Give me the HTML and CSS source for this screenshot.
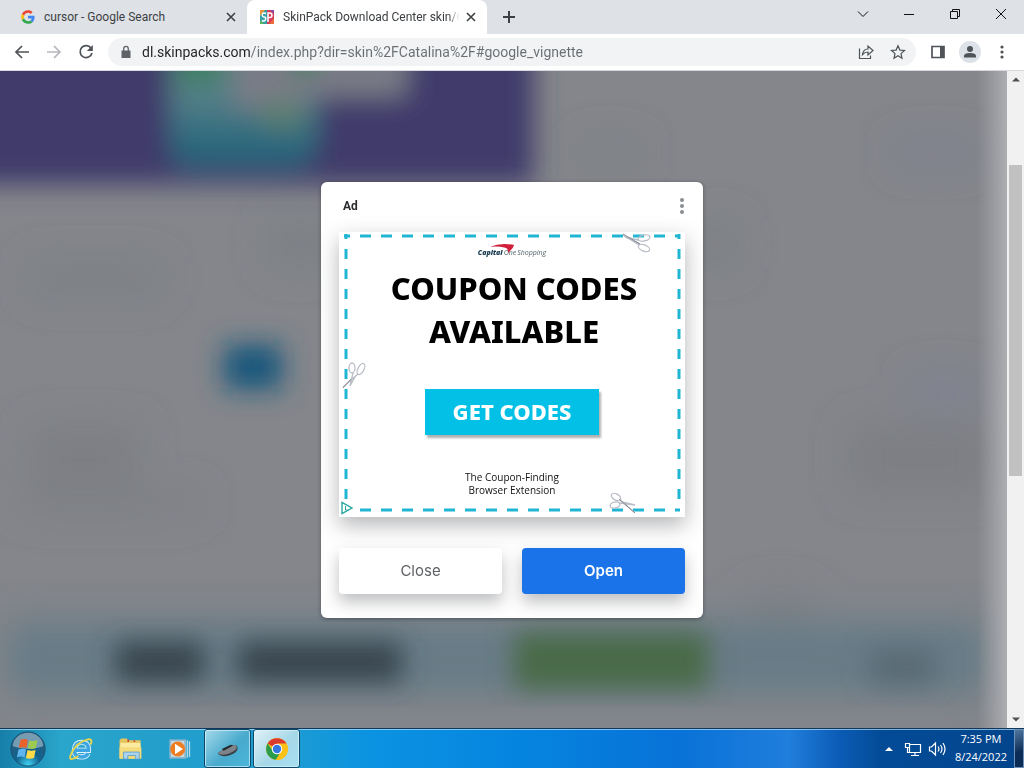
FILE: index.html
```html
<!DOCTYPE html>
<html lang="en">
<head>
<meta charset="utf-8">
<meta name="viewport" content="width=device-width, initial-scale=1">
<title>SkinPack Download Center</title>
<link rel="stylesheet" href="styles.css">
</head>
<body>
<header class="tabstrip">
  <div class="tab tab-idle">
    <svg class="favicon" viewBox="-4 -4 56 56" aria-hidden="true"><path fill="#ea4335" d="M24 9.500c3.540 0 6.710 1.220 9.210 3.600l6.850-6.850C35.900 2.380 30.470 0 24 0 14.620 0 6.510 5.380 2.560 13.220l7.980 6.190C12.430 13.720 17.740 9.500 24 9.500z"/><path fill="#4285f4" d="M46.980 24.550c0-1.570-.15-3.090-.38-4.550H24v9.020h12.940c-.58 2.960-2.260 5.480-4.780 7.180l7.730 6c4.510-4.180 7.090-10.360 7.090-17.650z"/><path fill="#fbbc05" d="M10.530 28.590c-.48-1.450-.76-2.990-.76-4.590s.27-3.140.76-4.590l-7.980-6.190C.92 16.460 0 20.120 0 24c0 3.880.92 7.540 2.560 10.780l7.970-6.190z"/><path fill="#34a853" d="M24 48c6.480 0 11.930-2.130 15.890-5.810l-7.730-6c-2.150 1.450-4.920 2.300-8.160 2.300-6.260 0-11.570-4.220-13.470-9.910l-7.980 6.190C6.510 42.620 14.620 48 24 48z"/></svg>
    <a class="tab-title" href="#">cursor - Google Search</a>
    <button class="tab-close" aria-label="Close tab"><svg viewBox="0 0 16 16"><path d="M4 4l8 8M12 4l-8 8"/></svg></button>
  </div>
  <div class="tab tab-active">
    <svg class="favicon" viewBox="0 0 16 16" aria-hidden="true">
      <path fill="#35a0a8" d="M1 1h7v14H1z"/><path fill="#d93a55" d="M8 1h7v14H8z"/><path fill="#e8963c" d="M1 1h5l-5 6z"/><path fill="#5bb85c" d="M1 11l4 4H1z"/><path fill="#8a4aa8" d="M11 1h4v4z"/><path fill="#e86b3a" d="M15 9v6h-5z"/>
      <path d="M7 4.500Q3.500 3 3.300 5.500T5.200 8T6.500 10.500T3 11.500M9 13V4h1.800Q13 4 13 6.300T10.800 8.600H9" fill="none" stroke="#fff" stroke-width="1.500"/>
    </svg>
    <a class="tab-title" href="#">SkinPack Download Center skin/C</a>
    <button class="tab-close" aria-label="Close tab"><svg viewBox="0 0 16 16"><path d="M4 4l8 8M12 4l-8 8"/></svg></button>
  </div>
  <button class="new-tab" aria-label="New tab"><svg viewBox="0 0 16 16"><path d="M8 2v12M2 8h12"/></svg></button>
  <div class="window-controls">
    <button aria-label="Search tabs"><svg viewBox="0 0 12 12"><path d="M1 3.500l5 5 5-5"/></svg></button>
    <button aria-label="Minimize"><svg viewBox="0 0 12 12"><path d="M1 6.500h10"/></svg></button>
    <button aria-label="Restore"><svg viewBox="0 0 12 12"><path d="M1.500 3.500h7v7h-7zM3.500 3.500v-2h7v7h-2"/></svg></button>
    <button aria-label="Close"><svg viewBox="0 0 12 12"><path d="M1 1l10 10M11 1L1 11"/></svg></button>
  </div>
</header>

<nav class="toolbar">
  <button class="tool" aria-label="Back"><svg viewBox="0 0 16 16"><path d="M15 8H2M8 2L2 8l6 6"/></svg></button>
  <button class="tool tool-off" aria-label="Forward"><svg viewBox="0 0 16 16"><path d="M1 8h13M8 2l6 6-6 6"/></svg></button>
  <button class="tool" aria-label="Reload"><svg viewBox="0 0 16 16"><path d="M13.300 4.500A6 6 0 1 0 14 9"/><path class="solid" d="M14.800 1v6h-6z"/></svg></button>
  <form class="omnibox">
    <svg class="lock" viewBox="0 0 12 14" aria-hidden="true"><path fill="#5f6368" d="M1.500 5.500h9V13h-9z"/><path d="M3.700 6V3.700a2.300 2.300 0 0 1 4.600 0V6" fill="none" stroke="#5f6368" stroke-width="1.300"/></svg>
    <input class="address" type="text" aria-label="Address" value="dl.skinpacks.com/index.php?dir=skin%2FCatalina%2F#google_vignette">
    <button type="button" class="tool" aria-label="Share"><svg class="thin" viewBox="0 0 16 16"><path d="M1.500 4.500v10h11v-3"/><path d="M4.500 10.500C5 7 7 5 10 5V2l5 4.500-5 4.500V8C7.500 8 6 8.800 4.500 10.500z"/></svg></button>
    <button type="button" class="tool" aria-label="Bookmark"><svg class="thin" viewBox="0 0 16 16"><path d="M8 1.800l1.900 4.300 4.600.4-3.500 3.100 1 4.600-4-2.400-4 2.400 1-4.600-3.500-3.100 4.600-.4z"/></svg></button>
  </form>
  <button class="tool" aria-label="Side panel"><svg viewBox="0 0 16 16"><path d="M2 2.500h12v11H2z"/><path class="solid" d="M10 2h4v12h-4z"/></svg></button>
  <button class="tool" aria-label="Profile"><span class="avatar"><svg viewBox="0 0 16 16"><g class="solid"><circle cx="8" cy="5" r="3"/><path d="M2 13.500V12q0-3 6-3t6 3v1.500z"/></g></svg></span></button>
  <button class="tool" aria-label="Menu"><svg viewBox="0 0 16 16"><g class="solid"><circle cx="8" cy="3" r="1.600"/><circle cx="8" cy="8" r="1.600"/><circle cx="8" cy="13" r="1.600"/></g></svg></button>
</nav>

<main class="viewport">
  <div class="page">
    <svg class="page-art" viewBox="0 0 1007 657" preserveAspectRatio="none" aria-hidden="true">
      <defs>
        <filter id="soft" x="-30%" y="-30%" width="160%" height="160%"><feGaussianBlur stdDeviation="13"/></filter>
        <filter id="softer" x="-50%" y="-50%" width="200%" height="200%"><feGaussianBlur stdDeviation="18"/></filter>
        <linearGradient id="edge"><stop offset="0" stop-color="#a8a9ae" stop-opacity="0"/><stop offset="1" stop-color="#adaeb2"/></linearGradient>
        <linearGradient id="cover" x2="0" y2="1"><stop offset="0" stop-color="#5c8178"/><stop offset=".45" stop-color="#557f88"/><stop offset=".8" stop-color="#29687c"/><stop offset="1" stop-color="#2c5f7c"/></linearGradient>
      </defs>
      <rect width="1007" height="657" fill="#84868b"/>
      <g filter="url(#soft)">
        <path fill="#403a6b" d="M-40-40h574V113H-40z"/>
        <path fill="url(#cover)" d="M170-30h148v102q-4 26-26 26H192q-22 0-22-20z"/>
        <path fill="#7a7b87" d="M235-40h172v66H310l-30 12h-45z"/>
        <path fill="#3a8060" d="M178-30h40v42h-40zM290-30h30v32h-30z"/>
        <path fill="#5f7f70" d="M262 28h40v28h-40z"/>
        <path fill="#15567b" d="M224 274h58v44h-58z"/>
      </g>
      <g filter="url(#softer)">
        <g fill="#787b7f" opacity=".55"><path d="M270 150h60v46h-60zM30 190h130v34H30zM30 354h110v60H30zM580 70h60v24h-60zM700 150h36v46h-36zM850 352h140v70H850z"/><path d="M20 420h180v22H20zM750 520h60v24h-60z"/></g>
        <path fill="#7b7e99" opacity=".5" d="M895 70h80v24h-80zM910 304h70v30h-70z"/>
        <path fill="#687c87" d="M6 550h982v74H6z"/>
      </g>
      <g filter="url(#soft)">
        <path fill="#38454e" d="M116 571h88v40h-88zM238 571h164v40H238z"/>
        <path fill="#4a6b47" d="M514 562h194v56H514z"/>
        <path fill="#5a6b74" d="M870 578h65v36h-65z"/>
      </g>
      <path fill="url(#edge)" d="M977 0h30v657h-30z"/>
    </svg>
  </div>
  <div class="scrollbar" aria-hidden="true">
    <svg class="scroll-arrow" viewBox="0 0 17 17"><path d="M5 10.500h8l-4-4z"/></svg>
    <div class="scroll-track"><div class="scroll-thumb"></div></div>
    <svg class="scroll-arrow" viewBox="0 0 17 17"><path d="M5 6.500h8l-4 4z"/></svg>
  </div>

  <div class="overlay">
    <section class="dialog" role="dialog" aria-label="Ad">
      <div class="dialog-head">
        <h2 class="dialog-label">Ad</h2>
        <button class="dialog-menu" aria-label="Ad options"><svg viewBox="0 0 6 18"><circle cx="3" cy="3" r="2"/><circle cx="3" cy="9" r="2"/><circle cx="3" cy="15" r="2"/></svg></button>
      </div>
      <div class="creative">
        <svg class="coupon-edge" viewBox="0 0 346 285" aria-hidden="true">
          <g stroke="#20b5d2" stroke-width="3" fill="none">
            <path stroke-dasharray="11 10" d="M21 4h310M21 278h310"/>
            <path stroke-dasharray="10 10" d="M7 17v252M340 17v252"/>
            <path d="M5 4h6M7 2v5M336 4h5M340 2v5M336 278h5"/>
          </g>
          <g fill="none" stroke="#b9bdc6" stroke-width="1.300">
            <ellipse cx="305" cy="16" rx="6" ry="3" transform="rotate(22 305 16)"/><ellipse cx="305" cy="6" rx="6" ry="3" transform="rotate(-12 305 6)"/><path d="M300 13L284 3M299 8l-13-3 15 7"/><path stroke="#858b96" stroke-width="1" d="M284 2l17 10"/>
            <ellipse cx="13" cy="136" rx="3" ry="5"/><ellipse cx="22" cy="137" rx="3" ry="6" transform="rotate(28 22 137)"/><path d="M19 142L4 155M14 141l-3 13 5-9"/><path stroke="#858b96" stroke-width="1" d="M4 156l8-9"/>
            <ellipse cx="277" cy="265" rx="5" ry="3" transform="rotate(30 277 265)"/><ellipse cx="276" cy="273" rx="5" ry="3" transform="rotate(-14 276 273)"/><path d="M281 268l14 12M281 271l15 2-13-3"/><path stroke="#858b96" stroke-width="1" d="M280 267l16 14"/>
          </g>
          <path d="M3 270.500v11l10-5.500z" fill="#fff" stroke="#25a79c" stroke-width="1.400"/><path d="M6.500 274v4h2" fill="none" stroke="#25a79c"/>
        </svg>
        <div class="brand"><b>Capital</b><i>One</i><span>Shopping</span>
          <svg class="swoosh" viewBox="0 0 28 12" aria-hidden="true"><path fill="#d0203a" d="M0 4Q12-1 27 2q-1 4-7 9 1-5-4-6Q10 3 0 4z"/></svg>
        </div>
        <h1 class="headline">COUPON CODES<br>AVAILABLE</h1>
        <a class="cta" href="#">GET CODES</a>
        <p class="tagline">The Coupon-Finding<br>Browser Extension</p>
      </div>
      <div class="actions">
        <button class="action">Close</button>
        <button class="action action-primary">Open</button>
      </div>
    </section>
  </div>
</main>

<footer class="taskbar">
  <button class="task task-start" aria-label="Start"><svg class="orb" viewBox="0 0 40 40">
    <defs><radialGradient id="orb" cx=".5" cy=".95" r=".9"><stop offset="0" stop-color="#3fd2f2"/><stop offset=".4" stop-color="#12628f"/><stop offset="1" stop-color="#2c5a78"/></radialGradient></defs>
    <circle cx="20" cy="20" r="18" fill="url(#orb)" stroke="#195070"/><path fill="#c6dbe6" opacity=".5" d="M4 17a16 14 0 0 1 32 0Q20 23 4 17z"/>
    <path fill="#e9622c" d="M12 10.500q4-2 8 0l-1.700 8.500q-4-1.500-8 0z"/><path fill="#9ccb4f" d="M21.500 11q4 1.500 8.500-.5l-1.700 8.500q-4 2-8.500 0z"/><path fill="#5fb6ee" d="M10 20.500q4-1.500 8 0l-1.700 8.500q-4-2-8 0z"/><path fill="#ffdb4a" d="M19.500 21q4 1.500 8.500 0l-1.700 8.500q-4 1.500-8.500 0z"/></svg></button>
  <button class="task" aria-label="Internet Explorer"><svg viewBox="0 0 32 32">
    <path d="M9 17.500h15.500Q25 8.500 17 8.500T8.500 17t8.500 8q5 0 7-4" fill="none" stroke="#e2f5ff" stroke-width="6"/><path d="M9 17.500h15.500Q25 8.500 17 8.500T8.500 17t8.500 8q5 0 7-4" fill="none" stroke="#3da5e2" stroke-width="4"/>
    <path d="M7 27q-6 2-2-6Q11 8 24 5q6-1 3 6M7 27q3-.5 6-3" fill="none" stroke="#e9d44a" stroke-width="2.200"/></svg></button>
  <button class="task" aria-label="Windows Explorer"><svg viewBox="0 0 32 32">
    <path fill="#e6c65c" d="M4 6l2-2h6l2 2h14v21H4z"/><path fill="#fbeaa0" d="M5 9h23v17H5z"/><path fill="#f4dc7c" d="M4 14h25v13H4z"/><path fill="#d04e37" d="M13 5h2v3h-2zM20 6h2v2h-2z"/><path fill="#a9d5ee" stroke="#5f9cc6" d="M8.500 19.500h18v8h-4v-4h-9v4h-5z"/></svg></button>
  <button class="task" aria-label="Windows Media Player"><svg viewBox="0 0 32 32">
    <path fill="#8eb6cc" d="M5 5h19v22H5z"/><path fill="#c7dbe5" d="M7 7h15v18H7z"/><path stroke="#b5d8ea" stroke-width="1.500" d="M25.500 6v20M28 7v18"/><circle cx="14.500" cy="16" r="8.500" fill="#ee7d22"/><path fill="#fff" d="M11.500 10l9 6-9 6z"/></svg></button>
  <button class="task task-open" aria-label="Mouse Properties"><svg viewBox="0 0 32 32">
    <path fill="#3a4045" d="M5 20l14-8q8-2 8 3 0 5-9 8-8 3-13-1z"/><path fill="#7d8388" d="M5 20l14-8q7-2 7 2 0 4-9 7-8 3-12 0z"/><path fill="#25292d" d="M9 16l10-5 3 1-11 6z"/></svg></button>
  <button class="task task-open task-current" aria-label="Google Chrome"><svg viewBox="0 0 32 32">
    <circle cx="16" cy="16" r="12.500" fill="#fbc116"/><path fill="#da3b2e" d="M16 16L5.200 9.800a12.500 12.500 0 0 1 21.600 0z"/><path fill="#2a9c4b" d="M5.200 9.800a12.500 12.500 0 0 0 9.600 18.600L20.800 18.500 12 19z"/><path fill="#fbc116" d="M26.800 9.800H16l4.800 8.700-6 9.900A12.500 12.500 0 0 0 26.800 9.800z"/><circle cx="16" cy="16" r="6" fill="#fff"/><circle cx="16" cy="16" r="4.800" fill="#3478df"/></svg></button>
  <div class="tray">
    <button class="tray-icon" aria-label="Show hidden icons"><svg viewBox="0 0 16 16"><path fill="#fff" d="M4 10h8L8 6z"/></svg></button>
    <button class="tray-icon" aria-label="Network"><svg viewBox="0 0 18 16"><path d="M5.500 3.500h11v8h-11zM11 12v2.500M7 14.500h8M1.500 2.500h4v4h-4zM3.500 6.500v5h2"/></svg></button>
    <button class="tray-icon" aria-label="Volume"><svg viewBox="0 0 18 16"><path d="M1.500 6h2l4-4v12l-4-4h-2zM10 5.500q2 2.500 0 5M12.500 4q3 4 0 8M15 2q4 6 0 12"/></svg></button>
    <time class="clock" datetime="2022-08-24T19:35"><span>7:35 PM</span><span>8/24/2022</span></time>
    <button class="show-desktop" aria-label="Show desktop"></button>
  </div>
</footer>
</body>
</html>
```

FILE: styles.css
```css
* { box-sizing: border-box; }

body {
  margin: 0;
  height: 100vh;
  display: flex;
  flex-direction: column;
  overflow: hidden;
  font-family: "Open Sans", "Noto Sans", sans-serif;
  font-size: 12px;
  color: #3c4043;
}

button {
  border: 0;
  padding: 0;
  background: none;
  font: inherit;
  color: inherit;
  display: flex;
  align-items: center;
  justify-content: center;
}

svg { display: block; }
a { color: inherit; text-decoration: none; }

/* Tab strip */
.tabstrip {
  display: flex;
  height: 34px;
  background: #dee1e6;
}

.tab {
  display: flex;
  align-items: center;
  padding: 0 8px 0 20px;
  flex: 0 1 247px;
  min-width: 0;
}

.tab-active {
  flex-basis: 240px;
  padding: 0 8px 0 12px;
  background: #fff;
  border-radius: 8px 8px 0 0;
}

.favicon { width: 16px; height: 16px; flex: none; margin-right: 8px; }

.tab-title {
  flex: 1;
  min-width: 0;
  overflow: hidden;
  font-family: Roboto, sans-serif;
  white-space: nowrap;
}

.tab-active .tab-title {
  -webkit-mask-image: linear-gradient(90deg, #000 92%, transparent 98%);
  mask-image: linear-gradient(90deg, #000 92%, transparent 98%);
}

.tab-close { width: 16px; height: 16px; flex: none; }
.tab-close svg { width: 16px; stroke: #3c4043; stroke-width: 1.600; }

.new-tab { width: 44px; }
.new-tab svg { width: 16px; stroke: #3c4043; stroke-width: 2; }

.window-controls {
  display: flex;
  margin-left: auto;
  height: 28px;
}

.window-controls button { width: 46px; }
.window-controls svg { width: 12px; fill: none; stroke: #111; stroke-width: 1; }

/* Toolbar */
.toolbar {
  display: flex;
  align-items: center;
  height: 37px;
  padding: 0 6px;
  background: #fff;
  border-bottom: 1px solid #d5d8dd;
}

.tool { width: 32px; height: 28px; flex: none; }
.tool svg { width: 16px; height: 16px; fill: none; stroke: #4f5357; stroke-width: 1.700; }
.tool .thin { stroke-width: 1.200; }
.tool .solid { fill: #4f5357; stroke: none; }
.tool-off svg { stroke: #b5b7ba; }

.omnibox {
  flex: 1;
  min-width: 0;
  display: flex;
  align-items: center;
  height: 28px;
  margin: 0 6px;
  padding: 0 2px 0 12px;
  border-radius: 14px;
  background: #f1f3f4;
}

.lock { width: 12px; height: 14px; flex: none; }

.address {
  flex: 1;
  min-width: 0;
  height: 24px;
  margin-left: 10px;
  padding: 0;
  border: 0;
  outline: 0;
  font: 14px/24px Roboto, sans-serif;
  color: #5f6368;
  background: linear-gradient(90deg, #202124 109px, #6a6e73 109px);
  -webkit-background-clip: text;
  background-clip: text;
  -webkit-text-fill-color: transparent;
}

.avatar {
  display: flex;
  align-items: center;
  justify-content: center;
  width: 22px;
  height: 22px;
  border-radius: 50%;
  background: #dde2e8;
}

/* Web page area */
.viewport {
  position: relative;
  flex: 1;
  min-height: 0;
  display: flex;
}

.page { position: relative; flex: 1; overflow: hidden; background: #84868b; }
.page-art { position: absolute; inset: 0; width: 100%; height: 100%; }

.scrollbar {
  width: 17px;
  display: flex;
  flex-direction: column;
  background: #f1f1f1;
}

.scroll-arrow { width: 17px; height: 17px; fill: #505050; }
.scroll-track { flex: 1; padding: 0 2px; display: flex; flex-direction: column; }
.scroll-track::before { content: ""; flex: 77; }
.scroll-track::after { content: ""; flex: 235; }
.scroll-thumb { flex: 311; background: #c1c1c1; }

/* Ad dialog */
.overlay {
  position: absolute;
  inset: 0;
  display: flex;
  align-items: center;
  justify-content: center;
}

.dialog {
  width: 382px;
  max-width: 100%;
  padding: 0 18px 24px;
  border-radius: 6px;
  background: #fff;
  overflow: hidden;
  box-shadow: 0 1px 4px rgba(0, 0, 0, .35);
}

.dialog-head {
  display: flex;
  align-items: center;
  justify-content: space-between;
  height: 50px;
  padding: 0 0 2px 4px;
}

.dialog-label {
  margin: 0;
  font: bold 12px/16px Roboto, sans-serif;
  color: #2a2b2d;
}

.dialog-menu { width: 6px; height: 18px; }
.dialog-menu svg { width: 6px; fill: #8b8e91; }

.creative {
  position: relative;
  display: flex;
  flex-direction: column;
  align-items: center;
  height: 285px;
  margin-bottom: 31px;
  background: #fff;
  box-shadow: 0 8px 20px rgba(40, 42, 50, .35);
}

.coupon-edge { position: absolute; inset: 0; width: 100%; height: 100%; }

.brand {
  position: relative;
  display: flex;
  gap: 1px;
  margin-top: 16px;
  font: italic 7px/10px "Open Sans", sans-serif;
  color: #53616a;
}

.brand b { color: #12384f; font-weight: 800; }
.swoosh { position: absolute; left: 12px; top: -5px; width: 25px; height: 11px; }

.headline {
  margin: 9px 0 0;
  padding-left: 4px;
  font: 800 31px/43px "Noto Sans", "Open Sans", sans-serif;
  color: #000;
  text-align: center;
  white-space: nowrap;
}

.cta {
  position: relative;
  width: 174px;
  height: 46px;
  margin-top: 36px;
  background: #03c1e6;
  font: 800 22px/44px "Noto Sans", "Open Sans", sans-serif;
  color: #fff;
  text-align: center;
  box-shadow: 2px 3px 2px rgba(60, 60, 60, .4);
}

.tagline {
  margin: 36px 0 0;
  font: 10px/13px "Open Sans", sans-serif;
  color: #111;
  text-align: center;
}

.actions { display: flex; gap: 20px; }

.action {
  flex: 1;
  height: 46px;
  border-radius: 4px;
  background: #fff;
  font: 15px/20px Inter, sans-serif;
  color: #5f6165;
  box-shadow: 0 8px 16px rgba(40, 42, 50, .3);
}

.action-primary {
  background: #1a73e8;
  color: #fff;
  font-weight: 600;
}

/* Taskbar */
.taskbar {
  display: flex;
  align-items: center;
  gap: 2px;
  height: 40px;
  padding-left: 4px;
  border-top: 1px solid #12375a;
  background: linear-gradient(90deg, #167fa9 0, #2aa5cb 6%, #249fcb 15%, #1e9dd2 28%, #0b93e2 36%, #0583df 52%, #0872d8 66%, #207edc 77%, #0b5cb6 82%, #034b97 86%, #03458c 100%);
  box-shadow: inset 0 1px 0 rgba(190, 235, 255, .65);
}

.task {
  width: 47px;
  height: 39px;
  flex: none;
}

.task-start { margin-right: 4px; }
.task svg { width: 28px; height: 28px; }
.task .orb { width: 38px; height: 38px; }

.task-open {
  border: 1px solid #0c4868;
  border-radius: 3px;
  background: linear-gradient(135deg, #a5d9eb, #48aacd 55%, #4ab6da);
  box-shadow: inset 0 0 0 1px rgba(225, 246, 255, .65);
}

.task-current { background: linear-gradient(135deg, #e3f2f7, #a5d7e8 55%, #a6e0f2); }

.tray {
  display: flex;
  align-items: center;
  height: 100%;
  margin-left: auto;
  color: #fff;
}

.tray-icon { width: 24px; height: 24px; }
.tray-icon svg { width: 18px; height: 16px; fill: none; stroke: #fff; stroke-width: 1.200; }
.tray-icon:first-child svg { stroke: none; }

.clock {
  display: flex;
  flex-direction: column;
  align-items: center;
  margin: 0 7px 2px 6px;
  font-size: 11px;
  line-height: 18px;
}

.show-desktop {
  width: 10px;
  height: 100%;
  border: 1px solid #6f93b8;
  background: linear-gradient(160deg, #50779f, #0b2c56 60%);
}
```
